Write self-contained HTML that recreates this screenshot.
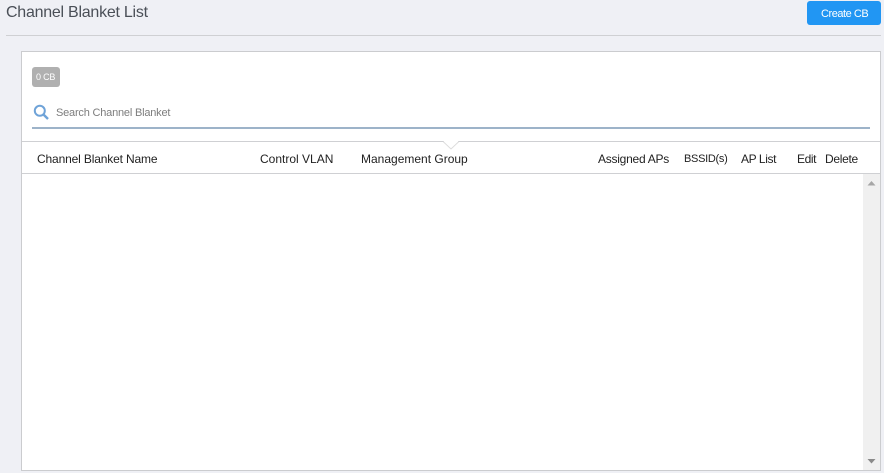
<!DOCTYPE html>
<html>
<head>
<meta charset="utf-8">
<style>
html,body{margin:0;padding:0}
body{width:884px;height:473px;overflow:hidden;background:#eff0f5;position:relative;font-family:"Liberation Sans",sans-serif;}
.a{position:absolute}
.t{position:absolute;white-space:nowrap;font-size:12px;line-height:14px;color:#222;top:152px}
</style>
</head>
<body>
<div class="t" style="left:6px;top:4px;font-size:16px;line-height:18px;color:#4a4f57;letter-spacing:-.25px">Channel Blanket List</div>
<div class="a" style="left:807px;top:1px;width:74px;height:24px;background:#2196f3;border-radius:3px"></div>
<div class="t" style="left:821px;top:7px;color:#fff;font-size:11px;letter-spacing:-.45px">Create CB</div>
<div class="a" style="left:6px;top:35px;width:875px;height:1px;background:#cfd0d3"></div>

<div class="a" style="left:21px;top:51px;width:858px;height:418px;background:#fff;border:1px solid #cbcccf"></div>
<div class="a" style="left:32px;top:67px;width:28px;height:20px;background:#b0b0b0;border-radius:3px"></div>
<div class="t" style="left:36px;top:71px;color:#fff;font-size:9px;line-height:12px;letter-spacing:-.2px">0 CB</div>

<svg class="a" style="left:33px;top:104px" width="16" height="16" viewBox="0 0 16 16"><circle cx="6.8" cy="6.8" r="5" fill="none" stroke="#6fa3d8" stroke-width="2"/><path d="M10.6 10.6L15 15" stroke="#6fa3d8" stroke-width="2.4" fill="none"/></svg>
<div class="t" style="left:56px;top:106px;color:#7d7d7d;font-size:11px;letter-spacing:-.2px">Search Channel Blanket</div>
<div class="a" style="left:32px;top:127px;width:838px;height:2px;background:#9db3c9"></div>

<div class="a" style="left:22px;top:141px;width:858px;height:1px;background:#cfd0d3"></div>
<svg class="a" style="left:443px;top:141px" width="16" height="9" viewBox="0 0 16 9"><path d="M0 0.5L8 8L16 0.5" fill="#fff" stroke="#dcdcdc" stroke-width="1"/><path d="M1 0H15V0.5H1Z" fill="#fff"/></svg>
<div class="a" style="left:22px;top:173px;width:858px;height:1px;background:#cfd0d3"></div>

<div class="t" style="left:37px;letter-spacing:-.15px">Channel Blanket Name</div>
<div class="t" style="left:260px">Control VLAN</div>
<div class="t" style="left:361px">Management Group</div>
<div class="t" style="left:598px;letter-spacing:-.25px">Assigned APs</div>
<div class="t" style="left:684px;font-size:11px;letter-spacing:-.3px">BSSID(s)</div>
<div class="t" style="left:741px;letter-spacing:-.4px">AP List</div>
<div class="t" style="left:797px;letter-spacing:-.4px">Edit</div>
<div class="t" style="left:825px;letter-spacing:-.3px">Delete</div>

<div class="a" style="left:863px;top:174px;width:17px;height:296px;background:#f0f0f0"></div>
<svg class="a" style="left:863px;top:174px" width="17" height="296" viewBox="0 0 17 296"><path d="M4.500 11.500L8.500 7L12.500 11.500Z" fill="#a6a6a6"/><path d="M4.500 285H12.500L8.500 289.500Z" fill="#8a8a8a"/></svg>
</body>
</html>
